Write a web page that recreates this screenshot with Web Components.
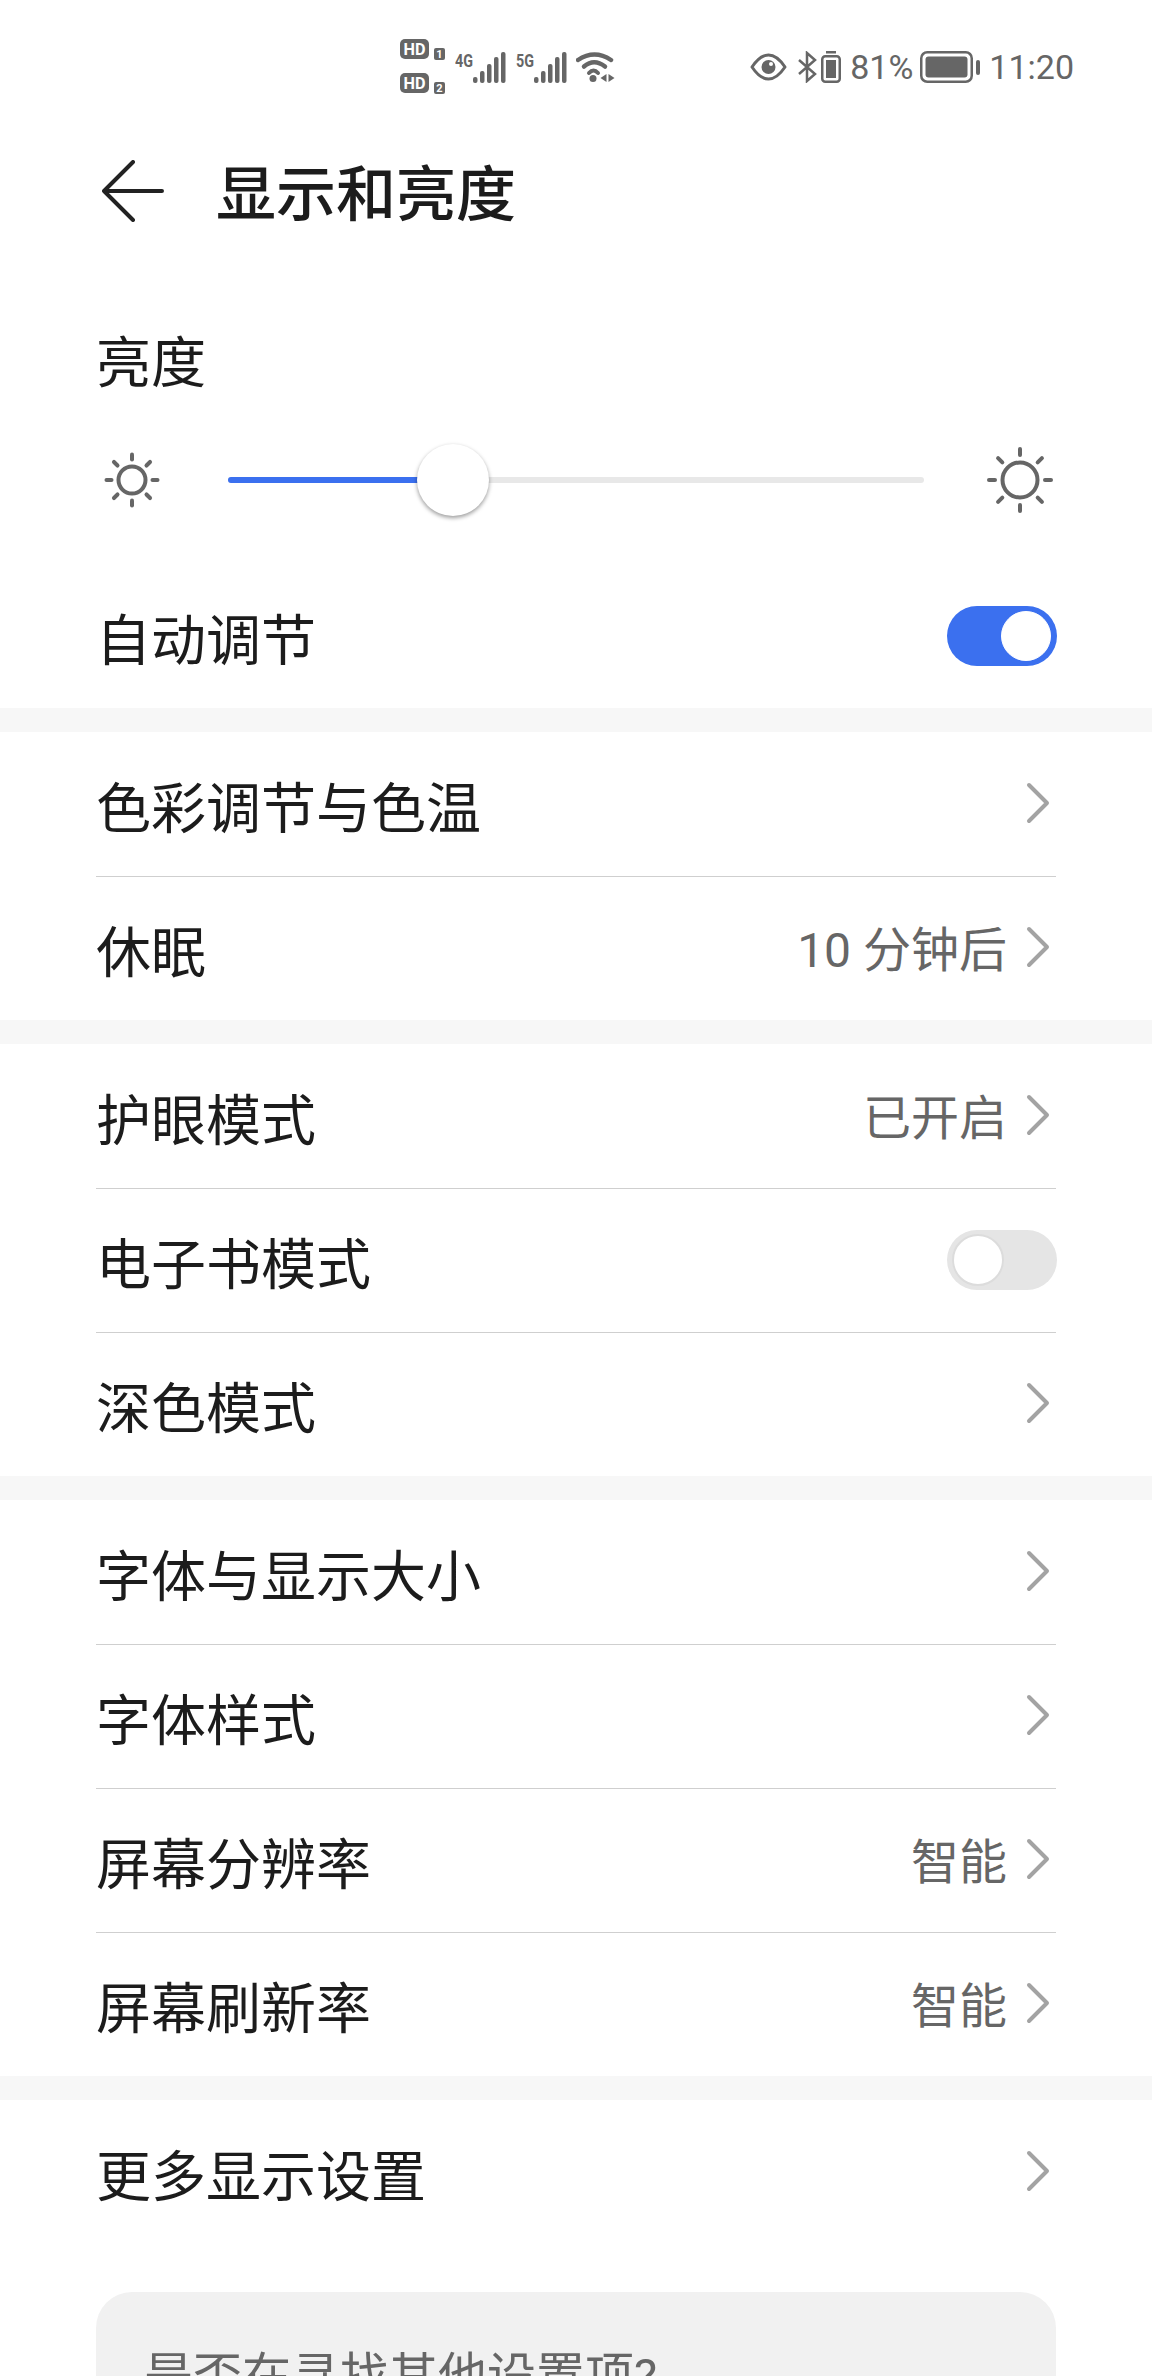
<!DOCTYPE html>
<html lang="zh-CN">
<head>
<meta charset="utf-8">
<title>显示和亮度</title>
<style>
  html, body { margin: 0; height: 2376px; overflow: hidden; background: #fff; }
  body { font-family: Roboto, "Noto Sans CJK SC", sans-serif; color: #1c1c1c; }
</style>
</head>
<body>
<status-bar></status-bar>
<app-header>显示和亮度</app-header>
<brightness-panel></brightness-panel>
<settings-group>
  <settings-row>色彩调节与色温</settings-row>
  <settings-row value="10 分钟后" last>休眠</settings-row>
</settings-group>
<settings-group>
  <settings-row value="已开启">护眼模式</settings-row>
  <settings-row toggle="off">电子书模式</settings-row>
  <settings-row last>深色模式</settings-row>
</settings-group>
<settings-group>
  <settings-row>字体与显示大小</settings-row>
  <settings-row>字体样式</settings-row>
  <settings-row value="智能">屏幕分辨率</settings-row>
  <settings-row value="智能" last>屏幕刷新率</settings-row>
</settings-group>
<settings-group>
  <settings-row last>更多显示设置</settings-row>
</settings-group>
<hint-card>是否在寻找其他设置项?</hint-card>

<script>
class StatusBar extends HTMLElement {
  constructor() {
    super();
    this.attachShadow({ mode: "open" });
  }

  static signal(label) {
    return /* html */`
    <svg width="51" height="39" viewBox="0 -4 51 39" fill="#666">
      <text x="0" y="15" font-family="Roboto" font-weight="700" font-size="19" textLength="18" lengthAdjust="spacingAndGlyphs">${label}</text>
      <rect x="18" y="25" width="4.5" height="6" rx="2"/>
      <rect x="25" y="19" width="4.5" height="12" rx="2"/>
      <rect x="32" y="12" width="4.5" height="19" rx="2"/>
      <rect x="39" y="5" width="4.5" height="26" rx="2"/>
      <rect x="46" y="0" width="4.5" height="31" rx="2"/>
    </svg>`;
  }

  connectedCallback() {
    this.shadowRoot.innerHTML = /* html */`
    <style>
      :host {
        display: flex;
        align-items: center;
        height: 134px;
        padding: 0 78px 0 400px;
        box-sizing: border-box;
        color: #666;
        font-size: 34px;
      }
      .left, .right { display: flex; align-items: center; }
      .left { gap: 10px; }
      .right { margin-left: auto; }
      svg { display: block; flex: none; }
      .pct { margin: 0 7px 0 9px; }
      .time { margin-left: 9px; }
    </style>
    <div class="left">
      <svg width="45" height="56" viewBox="0 0 45 56" font-family="Roboto" font-weight="700" text-anchor="middle">
        <rect width="29" height="20" rx="5" fill="#666"/>
        <text x="14.500" y="16" font-size="17" fill="#fff" textLength="22" lengthAdjust="spacingAndGlyphs">HD</text>
        <rect x="34" y="9" width="11" height="12" rx="2" fill="#666"/>
        <text x="39.500" y="19" font-size="11" fill="#fff">1</text>
        <rect y="34" width="29" height="20" rx="5" fill="#666"/>
        <text x="14.500" y="50" font-size="17" fill="#fff" textLength="22" lengthAdjust="spacingAndGlyphs">HD</text>
        <rect x="34" y="43" width="11" height="12" rx="2" fill="#666"/>
        <text x="39.500" y="53" font-size="11" fill="#fff">2</text>
      </svg>
      ${StatusBar.signal("4G")}
      ${StatusBar.signal("5G")}
      <svg width="40" height="31" viewBox="0 0 40 31" fill="none" stroke="#666" stroke-width="4.500" stroke-linecap="round" style="margin-left:-1px">
        <path d="M2 8Q18.500-3 35 8"/>
        <path d="M8 14.500Q18 6 29 14.500"/>
        <path d="M13 21Q17.500 16 22 21" stroke-width="4"/>
        <circle cx="17" cy="26.500" r="3.500" fill="#666" stroke="none"/>
        <path d="M30.500 22v8l-6-4zM32.500 22v8l6-4z" fill="#666" stroke="none"/>
      </svg>
    </div>
    <div class="right">
      <svg width="37" height="28" viewBox="0 0 37 28" fill="none" stroke="#666" stroke-width="3">
        <path d="M2 14Q10 2 18.500 2T35 14Q27 26 18.500 26T2 14Z" stroke-linejoin="round"/>
        <circle cx="18.500" cy="14" r="7" fill="#666" stroke="none"/>
        <circle cx="21" cy="11" r="2" fill="#fff" stroke="none"/>
      </svg>
      <svg width="19" height="32" viewBox="0 0 19 32" style="margin-left:11px" fill="none" stroke="#666" stroke-width="2.500">
        <path d="M1 9L17 23L9 30V2L17 9L1 23"/>
      </svg>
      <svg width="20" height="32" viewBox="0 0 20 32" style="margin-left:4px">
        <rect x="5" y="0" width="10" height="2.500" fill="#666"/>
        <rect x="1.250" y="5.250" width="17.500" height="25.500" rx="3" fill="none" stroke="#666" stroke-width="2.500"/>
        <rect x="5" y="9" width="10" height="18" fill="#666"/>
      </svg>
      <span class="pct">81%</span>
      <svg width="60" height="32" viewBox="0 0 60 32">
        <rect x="1.250" y="1.250" width="50.500" height="29.500" rx="6" fill="none" stroke="#666" stroke-width="2.500"/>
        <rect x="5.500" y="5.500" width="42" height="21" rx="3" fill="#666"/>
        <rect x="56" y="9" width="4" height="15" rx="2" fill="#666"/>
      </svg>
      <span class="time">11:20</span>
    </div>`;
  }
}

class AppHeader extends HTMLElement {
  constructor() {
    super();
    this.attachShadow({ mode: "open" });
  }

  connectedCallback() {
    this.shadowRoot.innerHTML = /* html */`
    <style>
      :host {
        display: flex;
        align-items: center;
        height: 114px;
        padding-left: 102px;
        font-size: 60px;
        font-weight: 500;
        color: #1c1c1c;
      }
      svg { flex: none; margin-right: 52px; }
      span { margin-top: -3px; }
    </style>
    <svg width="62" height="62" viewBox="0 0 62 62" fill="none" stroke="#222" stroke-width="4" stroke-linecap="round" stroke-linejoin="round">
      <path d="M60 31H2M31 2L2 31L31 60"/>
    </svg>
    <span><slot></slot></span>`;
  }
}

class ToggleSwitch extends HTMLElement {
  constructor() {
    super();
    this.attachShadow({ mode: "open" });
  }

  connectedCallback() {
    this.shadowRoot.innerHTML = /* html */`
    <style>
      :host {
        display: flex;
        align-items: center;
        justify-content: flex-start;
        flex: none;
        width: 110px;
        height: 60px;
        padding: 4px 5px;
        box-sizing: border-box;
        border-radius: 30px;
        background: #e5e5e5;
      }
      :host([on]) { background: #3b70ef; justify-content: flex-end; padding-right: 6px; }
      .knob {
        width: 52px;
        height: 52px;
        box-sizing: border-box;
        border-radius: 50%;
        background: #fff;
        border: 2px solid #dcdcdc;
      }
      :host([on]) .knob { border: 1px solid #fff; width: 50px; height: 50px; }
    </style>
    <div class="knob"></div>`;
  }
}

class SunIcon extends HTMLElement {
  constructor() {
    super();
    this.attachShadow({ mode: "open" });
  }

  connectedCallback() {
    const size = +this.getAttribute("size");
    const r = +this.getAttribute("ring");
    const from = +this.getAttribute("from");
    const to = +this.getAttribute("to");
    const rays = [];
    for (let i = 0; i < 8; i++) {
      const a = i * Math.PI / 4;
      const c = size / 2;
      rays.push(`<line x1="${c + from * Math.cos(a)}" y1="${c + from * Math.sin(a)}" x2="${c + to * Math.cos(a)}" y2="${c + to * Math.sin(a)}"/>`);
    }
    this.shadowRoot.innerHTML = /* html */`
    <style>
      :host { display: block; flex: none; width: ${size}px; height: ${size}px; }
      svg { display: block; }
    </style>
    <svg width="${size}" height="${size}" viewBox="0 0 ${size} ${size}" fill="none" stroke="#666" stroke-linecap="round" stroke-width="4">
      <circle cx="${size / 2}" cy="${size / 2}" r="${r}"/>
      ${rays.join("")}
    </svg>`;
  }
}

class BrightnessPanel extends HTMLElement {
  constructor() {
    super();
    this.attachShadow({ mode: "open" });
  }

  connectedCallback() {
    this.shadowRoot.innerHTML = /* html */`
    <style>
      :host {
        display: block;
        padding-top: 76px;
        font-size: 55px;
      }
      .label { height: 76px; line-height: 76px; padding: 1px 0 0 96px; box-sizing: border-box; }
      .slider {
        display: flex;
        align-items: center;
        height: 120px;
        margin-top: 20px;
        padding-left: 104px;
        margin-bottom: 24px;
      }
      .track {
        position: relative;
        width: 696px;
        height: 6px;
        margin: 0 62px 0 68px;
        border-radius: 3px;
        background: #e8e8e8;
      }
      .fill {
        width: 225px;
        height: 100%;
        border-radius: 3px 0 0 3px;
        background: #3b70ef;
      }
      .thumb {
        position: absolute;
        left: 189px;
        top: -33px;
        width: 72px;
        height: 72px;
        border-radius: 50%;
        background: #fff;
        box-shadow: 0 2px 4px rgba(0, 0, 0, .4);
      }
      .auto {
        display: flex;
        align-items: center;
        justify-content: space-between;
        height: 144px;
        padding: 0 95px 0 96px;
      }
    </style>
    <div class="label">亮度</div>
    <div class="slider">
      <sun-icon size="56" ring="13.500" from="20.500" to="25.500"></sun-icon>
      <div class="track">
        <div class="fill"></div>
        <div class="thumb"></div>
      </div>
      <sun-icon size="68" ring="17.500" from="25" to="31"></sun-icon>
    </div>
    <div class="auto">
      <span>自动调节</span>
      <toggle-switch on></toggle-switch>
    </div>`;
  }
}

class SettingsGroup extends HTMLElement {
  constructor() {
    super();
    this.attachShadow({ mode: "open" });
  }

  connectedCallback() {
    this.shadowRoot.innerHTML = /* html */`
    <style>
      :host { display: block; border-top: 24px solid #f7f7f7; }
    </style>
    <slot></slot>`;
  }
}

class SettingsRow extends HTMLElement {
  constructor() {
    super();
    this.attachShadow({ mode: "open" });
  }

  connectedCallback() {
    const value = this.getAttribute("value");
    const toggle = this.getAttribute("toggle");
    let tail = /* html */`
      ${value ? `<span class="value">${value}</span>` : ""}
      <svg width="24" height="42" viewBox="0 0 24 42" fill="none" stroke="#a3a3a3" stroke-width="4" stroke-linecap="round" stroke-linejoin="round">
        <path d="M3 3L21 21L3 39"/>
      </svg>`;
    if (toggle) tail = `<toggle-switch ${toggle === "on" ? "on" : ""}></toggle-switch>`;
    this.shadowRoot.innerHTML = /* html */`
    <style>
      :host { display: block; padding: 0 96px; font-size: 55px; }
      .row {
        display: flex;
        align-items: center;
        height: 145px;
        margin-bottom: -1px;
        box-sizing: border-box;
        border-bottom: 1px solid #cfcfcf;
      }
      :host([last]) .row { height: 144px; margin-bottom: 0; border-bottom: 0; }
      .text { flex: 1; margin-top: -1px; }
      .value { font-size: 48px; color: #666; margin: -4px 19px 0 0; }
      svg { flex: none; margin: -2px 6px 0 0; }
      toggle-switch { margin: -1px -1px 0 0; }
    </style>
    <div class="row">
      <span class="text"><slot></slot></span>
      ${tail}
    </div>`;
  }
}

class HintCard extends HTMLElement {
  constructor() {
    super();
    this.attachShadow({ mode: "open" });
  }

  connectedCallback() {
    this.shadowRoot.innerHTML = /* html */`
    <style>
      :host {
        display: block;
        margin: 48px 96px 0;
        padding: 50px 48px 60px;
        border-radius: 36px;
        background: #f1f1f1;
        font-size: 49px;
        line-height: 70px;
        color: #666;
      }
    </style>
    <slot></slot>`;
  }
}

customElements.define("status-bar", StatusBar);
customElements.define("app-header", AppHeader);
customElements.define("toggle-switch", ToggleSwitch);
customElements.define("sun-icon", SunIcon);
customElements.define("brightness-panel", BrightnessPanel);
customElements.define("settings-group", SettingsGroup);
customElements.define("settings-row", SettingsRow);
customElements.define("hint-card", HintCard);
</script>
</body>
</html>
